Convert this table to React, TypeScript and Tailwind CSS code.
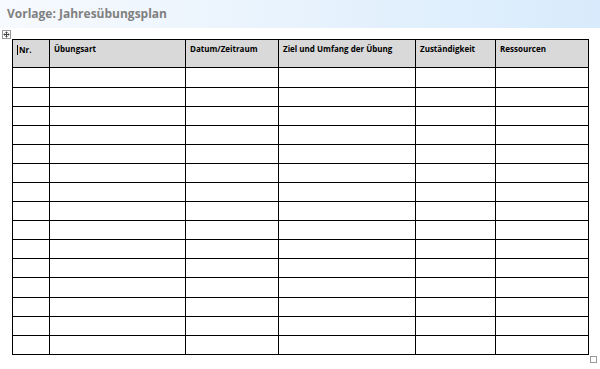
const columns = [
  { label: 'Nr.', width: 'w-[37px]' },
  { label: 'Übungsart', width: 'w-[136px]' },
  { label: 'Datum/Zeitraum', width: 'w-[93px]' },
  { label: 'Ziel und Umfang der Übung', width: 'w-[137px]' },
  { label: 'Zuständigkeit', width: 'w-[80px]' },
  { label: 'Ressourcen', width: 'w-[93px]' },
]

// row heights incl. bottom border, as measured in the document
const rowHeights = [20, 19, 19, 19, 19, 19, 19, 19, 19, 19, 19, 20, 19, 19, 19]

function MoveHandle() {
  return (
    <svg width="9" height="9" viewBox="0 0 9 9" className="block">
      <rect x="0.5" y="0.5" width="8" height="8" fill="#fff" stroke="#9a9a9a" />
      <path d="M4.5 1.5v6M1.5 4.5h6" stroke="#444" strokeWidth="1" />
      <path d="M3.5 2.5h2M3.5 6.5h2M2.5 3.5v2M6.5 3.5v2" stroke="#444" strokeWidth="1" />
    </svg>
  )
}

export default function App() {
  return (
    <div className="w-[600px] h-[369px] bg-white overflow-hidden" style={{ fontFamily: '"Open Sans", "Liberation Sans", sans-serif' }}>
      <div className="h-[28px] bg-gradient-to-r from-[#f7fafe] to-[#d8ebfc] flex items-center pl-[7px]">
        <span className="text-[12px] font-bold text-[#808080] leading-none">
          Vorlage: Jahresübungsplan
        </span>
      </div>
      <div className="pl-[2px] pt-[2px] h-[11px]">
        <MoveHandle />
      </div>
      <div className="relative ml-[12px] w-[577px] border-l border-t border-black">
        <div className="flex h-[28px] border-b border-black bg-[#d9d9d9]">
          {columns.map((c, i) => (
            <div key={c.label} className={`${c.width} shrink-0 border-r border-black pl-[4px] pt-[5px] text-[8px] font-bold text-black leading-none`}>
              {i === 0 && <span className="inline-block w-px h-[10px] bg-black align-[-2px] mr-[1px]" />}
              {c.label}
            </div>
          ))}
        </div>
        {rowHeights.map((h, i) => (
          <div key={i} className={`flex border-b border-black ${h === 20 ? 'h-[20px]' : 'h-[19px]'}`}>
            {columns.map((c) => (
              <div key={c.label} className={`${c.width} shrink-0 border-r border-black`} />
            ))}
          </div>
        ))}
        <div className="absolute right-[-8px] bottom-[-8px] w-[7px] h-[7px] border border-[#9a9a9a] bg-white" />
      </div>
    </div>
  )
}
